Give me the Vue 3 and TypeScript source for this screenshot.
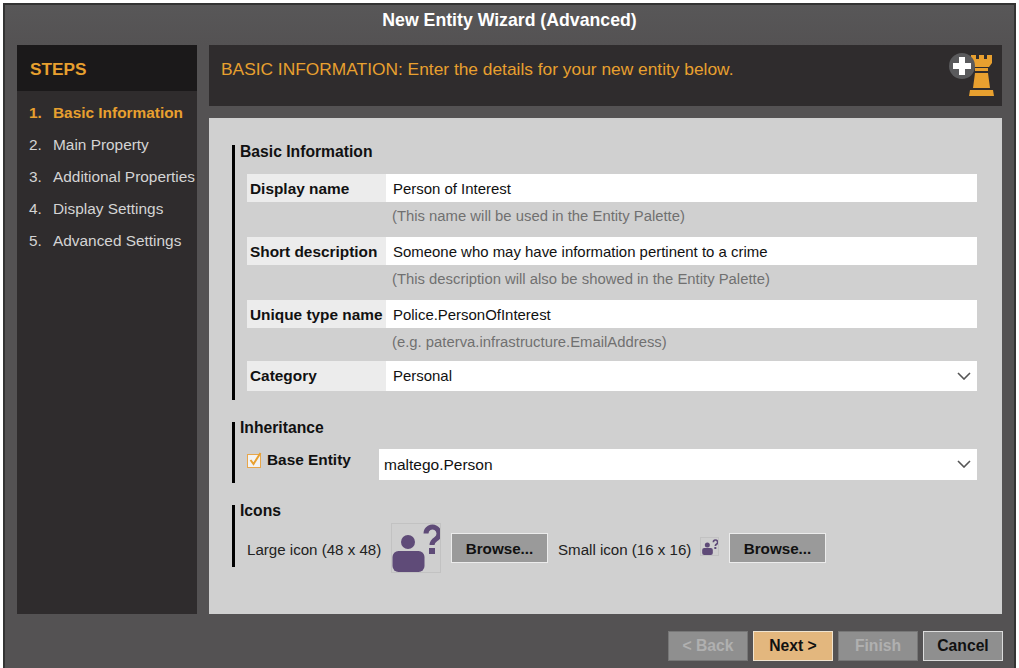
<script setup lang="ts">
const steps = ['Basic Information', 'Main Property', 'Additional Properties', 'Display Settings', 'Advanced Settings']
const fields = [
  { label: 'Display name', value: 'Person of Interest', hint: '(This name will be used in the Entity Palette)' },
  { label: 'Short description', value: 'Someone who may have information pertinent to a crime', hint: '(This description will also be showed in the Entity Palette)' },
  { label: 'Unique type name', value: 'Police.PersonOfInterest', hint: '(e.g. paterva.infrastructure.EmailAddress)' },
]
</script>

<template>
  <div class="window">
    <div class="title">New Entity Wizard (Advanced)</div>
    <div class="main">
      <aside class="side">
        <div class="side-head">STEPS</div>
        <ol class="steps">
          <li v-for="(s, i) in steps" :key="s" :class="{ active: i === 0 }">
            <span class="num">{{ i + 1 }}.</span><span>{{ s }}</span>
          </li>
        </ol>
      </aside>
      <div class="content">
        <div class="banner">
          <span>BASIC INFORMATION: Enter the details for your new entity below.</span>
          <svg class="banner-icon" width="46" height="44" viewBox="0 0 46 44">
            <path fill="#e8a02f" d="M23 3h5v4h3V3h5v4h3V3h5v8l-3 4H26l-3-4zM27 16h13v3H27zM27 21h13l2 15H25zM22 38h23l1 6H21z"/>
            <circle cx="14" cy="14" r="13" fill="#5a5a5c"/>
            <path fill="#fff" d="M11 5h6v6h6v6h-6v6h-6v-6H5v-6h6z"/>
          </svg>
        </div>
        <div class="panel">
          <section class="group first">
            <h3>Basic Information</h3>
            <div v-for="f in fields" :key="f.label" class="field">
              <div class="row">
                <label>{{ f.label }}</label>
                <div class="input">{{ f.value }}</div>
              </div>
              <div class="hint">{{ f.hint }}</div>
            </div>
            <div class="row cat">
              <label>Category</label>
              <div class="input select">Personal
                <svg width="14" height="8" viewBox="0 0 14 8"><path d="M1 1l6 6 6-6" fill="none" stroke="#555" stroke-width="1.6"/></svg>
              </div>
            </div>
          </section>
          <section class="group inherit">
            <h3>Inheritance</h3>
            <div class="base">
              <svg class="check" width="16" height="16" viewBox="0 0 16 16">
                <rect x="0.5" y="2.5" width="13" height="13" fill="#f3f3f3" stroke="#e8a64a"/>
                <path d="M3.5 8l3 4 7-11" fill="none" stroke="#e8a02f" stroke-width="2"/>
              </svg>
              <b>Base Entity</b>
              <div class="input select base-sel">maltego.Person
                <svg width="14" height="8" viewBox="0 0 14 8"><path d="M1 1l6 6 6-6" fill="none" stroke="#555" stroke-width="1.6"/></svg>
              </div>
            </div>
          </section>
          <section class="group icons">
            <h3>Icons</h3>
            <div class="icon-row">
              <span class="large-label">Large icon (48 x 48)</span>
              <div class="icon-box large">
                <svg width="48" height="48" viewBox="0 0 48 48">
                  <circle cx="16" cy="18" r="7" fill="#5f4b78"/>
                  <rect x="0.5" y="27" width="32" height="21" rx="6" fill="#5f4b78"/>
                  <path d="M34 9.5a6.5 6.5 0 1 1 10 5.5c-2.5 1.6-4 3-4 6" fill="none" stroke="#5f4b78" stroke-width="5"/>
                  <rect x="37" y="24" width="6" height="6" fill="#5f4b78"/>
                </svg>
              </div>
              <button class="browse">Browse...</button>
              <span class="small-label">Small icon (16 x 16)</span>
              <div class="icon-box small">
                <svg width="16" height="16" viewBox="0 0 48 48">
                  <circle cx="16" cy="18" r="7.5" fill="#5f4b78"/>
                  <rect x="0.5" y="27" width="32" height="21" rx="6" fill="#5f4b78"/>
                  <path d="M34 9.5a6.5 6.5 0 1 1 10 5.5c-2.5 1.6-4 3-4 6" fill="none" stroke="#5f4b78" stroke-width="5"/>
                  <rect x="37" y="24" width="6" height="6" fill="#5f4b78"/>
                </svg>
              </div>
              <button class="browse">Browse...</button>
            </div>
          </section>
        </div>
      </div>
    </div>
    <div class="footer">
      <button class="btn disabled">&lt; Back</button>
      <button class="btn next">Next &gt;</button>
      <button class="btn disabled">Finish</button>
      <button class="btn cancel">Cancel</button>
    </div>
  </div>
</template>

<style>
html, body { margin: 0; background: #fff; overflow: hidden; }
</style>

<style scoped>
.window {
  box-sizing: border-box;
  width: 1013px;
  height: 665px;
  margin: 3px 0 0 3px;
  border: 2px solid #333;
  border-bottom: 0;
  background: #545253;
  font-family: "Liberation Sans", Arial, sans-serif;
  font-size: 15px;
  color: #111;
  overflow: hidden;
  display: flex;
  flex-direction: column;
}
.title {
  height: 40px;
  padding-top: 4px;
  box-sizing: border-box;
  line-height: 22px;
  text-align: center;
  color: #fff;
  font-weight: bold;
  font-size: 17.7px;
  background: linear-gradient(#585758, #545253);
  flex: none;
}
.main {
  display: flex;
  gap: 12px;
  padding: 0 12px;
  height: 569px;
  flex: none;
}
.side {
  width: 180px;
  background: #2f2c2d;
  flex: none;
}
.side-head {
  height: 46px;
  line-height: 49px;
  padding-left: 13px;
  background: #1b191a;
  color: #e8a02f;
  font-weight: bold;
  font-size: 17.2px;
}
.steps {
  list-style: none;
  margin: 0;
  padding: 6px 0 0 12px;
}
.steps li {
  height: 32px;
  line-height: 32px;
  color: #d4d4d4;
  font-size: 15.4px;
  display: flex;
  white-space: nowrap;
}
.steps li.active { color: #e8a02f; font-weight: bold; }
.num { width: 24px; flex: none; }
.content { flex: 1; display: flex; flex-direction: column; gap: 12px; min-width: 0; }
.banner {
  height: 61px;
  flex: none;
  background: #2f2c2d;
  color: #e8a02f;
  font-size: 17.35px;
  padding: 14px 12px 0;
  box-sizing: border-box;
  line-height: 20px;
  position: relative;
}
.banner-icon { position: absolute; right: 8px; top: 7px; }
.panel {
  flex: 1;
  background: #d0d0d0;
  padding: 27px 25px 0 23px;
}
.group {
  border-left: 3px solid #000;
  padding-left: 5px;
}
.group h3 {
  margin: 0;
  font-size: 15.7px;
  line-height: 12px;
  font-weight: bold;
  color: #111;
}
.first { height: 255px; }
.first h3 { margin-bottom: 17px; position: relative; top: 1px; }
.first .field { height: 63px; }
.row { display: flex; height: 28px; margin-left: 7px; }
.row label {
  width: 139px;
  flex: none;
  box-sizing: border-box;
  background: #ececec;
  font-weight: bold;
  font-size: 15.4px;
  line-height: 29px;
  padding-left: 3px;
  white-space: nowrap;
}
.input {
  flex: 1;
  background: #fff;
  line-height: 29px;
  padding-left: 7px;
  font-size: 14.95px;
  position: relative;
}
.select svg { position: absolute; right: 6px; top: 11px; }
.hint { margin: 0 0 0 146px; padding-left: 6px; color: #707070; font-size: 14.85px; line-height: 28px; }
.cat { height: 30px; margin-top: -2px; }
.inherit { height: 61px; margin-top: 22px; }
.base { display: flex; align-items: flex-start; margin: 4px 0 0 7px; position: relative; height: 45px; }
.check { margin-top: 14px; flex: none; }
.base b { font-size: 15.4px; margin-left: 4px; margin-top: 13px; line-height: 18px; width: 112px; flex: none; }
.base-sel { height: 31px; margin-top: 11px; line-height: 32px; padding-left: 5px; font-size: 15.5px; }
.icons { height: 62px; margin-top: 22px; }
.icon-row { display: flex; align-items: flex-start; margin: 4px 0 0 7px; position: relative; white-space: nowrap; }
.icon-row > span { line-height: 20px; margin-top: 19px; color: #222; font-size: 15.1px; flex: none; }
.large-label { width: 134px; }
.icon-box { background: #cfcfcf; border: 1px solid #c2c2c2; box-sizing: border-box; display: flex; align-items: center; justify-content: center; flex: none; }
.large { width: 50px; height: 50px; margin: 2px 10px 0 10px; }
.small { width: 19px; height: 19px; margin: 16px 10px 0 9px; }
.small-label { width: 133px; margin-left: 10px; }
.browse {
  width: 97px;
  height: 30px;
  box-sizing: border-box;
  margin-top: 12px;
  padding: 0;
  background: #9a9a9a;
  border: 1px solid #ececec;
  font: bold 15.2px "Liberation Sans", Arial, sans-serif;
  color: #111;
  flex: none;
}
.footer {
  display: flex;
  justify-content: flex-end;
  gap: 5px;
  padding: 17px 11px 0 0;
}
.btn {
  width: 80px;
  height: 30px;
  padding: 0;
  box-sizing: border-box;
  font: bold 15.7px "Liberation Sans", Arial, sans-serif;
  border: 1px solid #d8d8d8;
  background: #9a9a9a;
  color: #111;
}
.btn.disabled { color: #b0b0b0; border-color: #777; background: #8f8f8f; }
.btn.next { background: #e3b77e; border-color: #f0e4d0; }
.btn.cancel { background: #8f8f8f; border-color: #dcdcdc; }
</style>
